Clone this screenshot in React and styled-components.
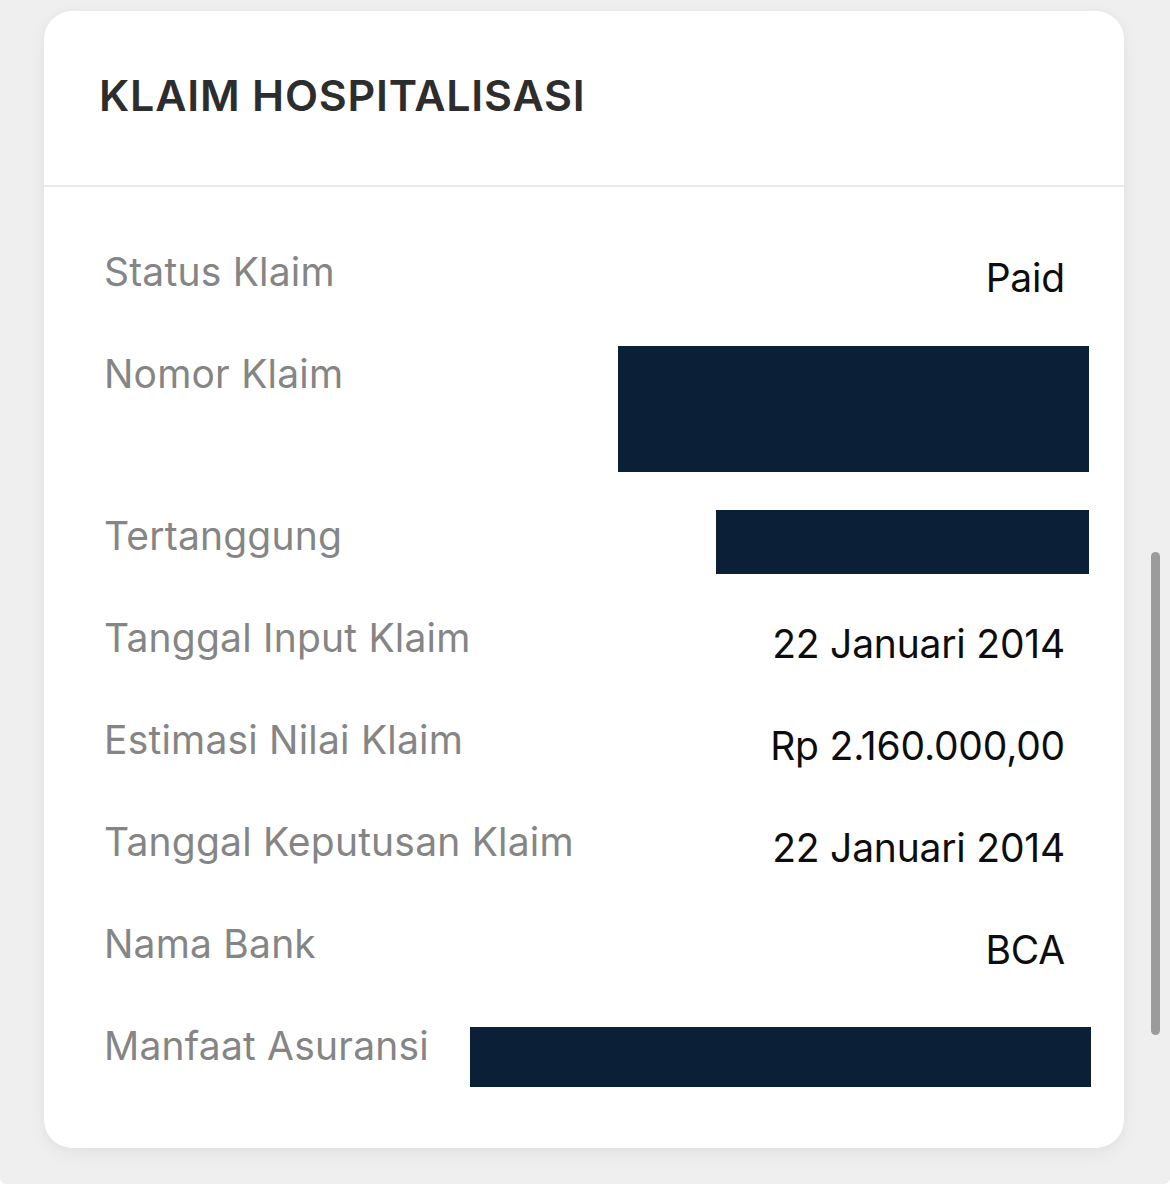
import React from "react";
import styled, { createGlobalStyle } from "styled-components";

const GlobalStyle = createGlobalStyle`
  html, body {
    margin: 0;
    padding: 0;
    background: #ffffff;
  }
  body {
    font-family: Inter, "Noto Sans", "Liberation Sans", sans-serif;
    -webkit-font-smoothing: antialiased;
  }
`;

const Frame = styled.div`
  position: relative;
  width: 1170px;
  height: 1184px;
  box-sizing: border-box;
  padding: 11px 46px 0 44px;
  background: #efefef;
  border-radius: 0 0 6px 6px;
`;

const Card = styled.section`
  background: #ffffff;
  border-radius: 28px;
  box-shadow: 0 6px 18px rgba(0, 0, 0, 0.05), 0 0 8px rgba(0, 0, 0, 0.025);
  overflow: hidden;
`;

const Header = styled.header`
  height: 176px;
  display: flex;
  align-items: center;
  padding: 0 0 7px 55px;
  box-sizing: border-box;
  border-bottom: 2px solid #e9e9e9;
`;

const Title = styled.h1`
  margin: 0;
  font-size: 43px;
  font-weight: 600;
  letter-spacing: 0.8px;
  color: #2d2d2d;
`;

const Body = styled.div`
  display: flex;
  flex-direction: column;
  gap: 54px;
  padding: 61px 59px 78px 60px;
`;

const Row = styled.div`
  display: flex;
  justify-content: space-between;
  align-items: flex-start;
  min-height: ${(p) => p.$minHeight || 48}px;
`;

const Label = styled.span`
  flex-shrink: 0;
  font-size: 39px;
  line-height: 48px;
  letter-spacing: 0.2px;
  color: #858585;
  font-weight: 400;
`;

const Value = styled.span`
  margin: 6px 0 -6px;
  font-size: 39px;
  line-height: 48px;
  letter-spacing: -0.2px;
  color: #0d0d0d;
  text-align: right;
  white-space: nowrap;
`;

const Redacted = styled.div`
  flex-shrink: 0;
  width: ${(p) => p.$w}px;
  height: ${(p) => p.$h}px;
  margin: ${(p) => p.$top}px -${(p) => p.$overhang}px ${(p) => p.$bottom}px 0;
  background: #0b1f36;
`;

const ScrollThumb = styled.div`
  position: absolute;
  left: 1151px;
  top: 552px;
  width: 9px;
  height: 483px;
  border-radius: 5px;
  background: #9b9b9b;
`;

const rows = [
  { label: "Status Klaim", value: "Paid" },
  {
    label: "Nomor Klaim",
    minHeight: 108,
    block: { w: 471, h: 126, top: -4, bottom: -14, overhang: 24 },
  },
  {
    label: "Tertanggung",
    block: { w: 373, h: 64, top: -2, bottom: -14, overhang: 24 },
  },
  { label: "Tanggal Input Klaim", value: "22 Januari 2014" },
  { label: "Estimasi Nilai Klaim", value: "Rp 2.160.000,00" },
  { label: "Tanggal Keputusan Klaim", value: "22 Januari 2014" },
  { label: "Nama Bank", value: "BCA" },
  {
    label: "Manfaat Asuransi",
    block: { w: 621, h: 60, top: 5, bottom: -17, overhang: 26 },
  },
];

export default function App() {
  return (
    <>
      <GlobalStyle />
      <Frame>
        <Card>
          <Header>
            <Title>KLAIM HOSPITALISASI</Title>
          </Header>
          <Body>
            {rows.map((r) => (
              <Row key={r.label} $minHeight={r.minHeight}>
                <Label>{r.label}</Label>
                {r.block ? (
                  <Redacted
                    $w={r.block.w}
                    $h={r.block.h}
                    $top={r.block.top}
                    $bottom={r.block.bottom}
                    $overhang={r.block.overhang}
                  />
                ) : (
                  <Value>{r.value}</Value>
                )}
              </Row>
            ))}
          </Body>
        </Card>
        <ScrollThumb />
      </Frame>
    </>
  );
}
